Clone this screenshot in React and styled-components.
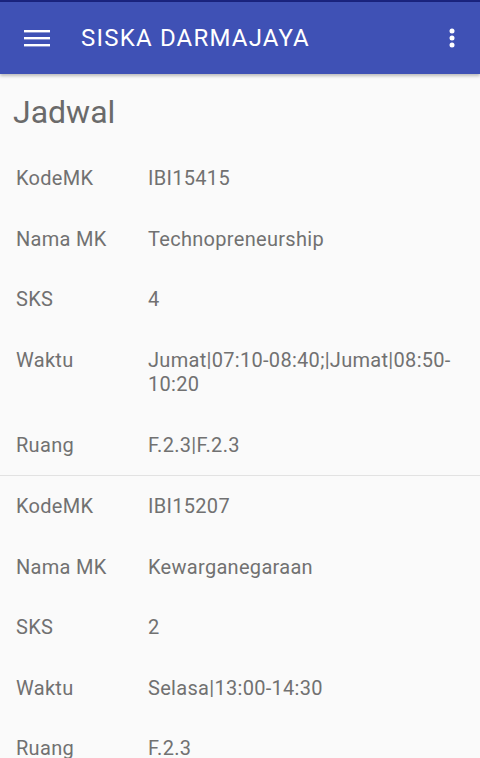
import React from "react";
import styled, { createGlobalStyle } from "styled-components";

const Global = createGlobalStyle`
  html, body { margin: 0; padding: 0; background: #fafafa; }
  body { font-family: Roboto, "Noto Sans", sans-serif; overflow: hidden; }
  * { box-sizing: border-box; }
`;

const Screen = styled.div`
  width: 480px;
  height: 758px;
  background: #fafafa;
  overflow: hidden;
  display: flex;
  flex-direction: column;
`;

const StatusEdge = styled.div`
  flex-shrink: 0;
  height: 2px;
  background: #1a237e;
`;

const Toolbar = styled.header`
  flex-shrink: 0;
  height: 72px;
  background: #3f51b5;
  display: flex;
  align-items: center;
  padding: 0 0 0 24px;
  box-shadow: 0 2px 3px rgba(0, 0, 0, 0.25);
  position: relative;
  z-index: 1;
`;

const Title = styled.h1`
  margin: 0 0 0 31px;
  font-size: 24px;
  font-weight: 400;
  color: #ffffff;
  flex: 1;
  letter-spacing: 1.2px;
`;

const IconButton = styled.button`
  border: 0;
  background: transparent;
  padding: 0;
  display: flex;
  align-items: center;
  justify-content: center;
  width: ${(p) => p.$w}px;
  height: 24px;
  margin-right: ${(p) => p.$mr || 0}px;
`;

const Content = styled.main`
  flex-shrink: 0;
  display: flex;
  flex-direction: column;
`;

const PageTitle = styled.h2`
  margin: 0;
  padding: 18px 0 0 13px;
  height: 74px;
  font-size: 32px;
  font-weight: 400;
  color: #6a6a6a;
  line-height: 40px;
`;

const Card = styled.section`
  display: flex;
  flex-direction: column;
  border-bottom: ${(p) => (p.$divider ? "1.5px solid #e2e2e2" : "none")};
`;

const Row = styled.div`
  display: grid;
  grid-template-columns: 132px 1fr;
  padding: 18px 10px 18px 16px;
  font-size: 20px;
  line-height: 24.5px;
  letter-spacing: 0.3px;
  color: #717171;
`;

const Label = styled.span``;
const Value = styled.span``;

const Hamburger = () => (
  <svg width="26" height="18" viewBox="0 0 26 18">
    <rect x="0" y="1" width="26" height="2.4" fill="#fff" />
    <rect x="0" y="8" width="26" height="2.4" fill="#fff" />
    <rect x="0" y="15" width="26" height="2.4" fill="#fff" />
  </svg>
);

const Kebab = () => (
  <svg width="6" height="20" viewBox="0 0 6 20">
    <circle cx="3" cy="3" r="2.5" fill="#fff" />
    <circle cx="3" cy="10" r="2.5" fill="#fff" />
    <circle cx="3" cy="17" r="2.5" fill="#fff" />
  </svg>
);

const data = [
  {
    KodeMK: "IBI15415",
    "Nama MK": "Technopreneurship",
    SKS: "4",
    Waktu: ["Jumat|07:10-08:40;|Jumat|08:50-", "10:20"],
    Ruang: "F.2.3|F.2.3",
  },
  {
    KodeMK: "IBI15207",
    "Nama MK": "Kewarganegaraan",
    SKS: "2",
    Waktu: "Selasa|13:00-14:30",
    Ruang: "F.2.3",
  },
];

const renderValue = (v) =>
  Array.isArray(v)
    ? v.map((part, i) => (
        <React.Fragment key={i}>
          {i > 0 && <wbr />}
          {part}
        </React.Fragment>
      ))
    : v;

export default function App() {
  return (
    <>
      <Global />
      <Screen>
        <StatusEdge />
        <Toolbar>
          <IconButton $w={26}>
            <Hamburger />
          </IconButton>
          <Title>SISKA DARMAJAYA</Title>
          <IconButton $w={6} $mr={25}>
            <Kebab />
          </IconButton>
        </Toolbar>
        <Content>
          <PageTitle>Jadwal</PageTitle>
          {data.map((item, i) => (
            <Card key={i} $divider={i < data.length - 1}>
              {Object.entries(item).map(([k, v]) => (
                <Row key={k}>
                  <Label>{k}</Label>
                  <Value>{renderValue(v)}</Value>
                </Row>
              ))}
            </Card>
          ))}
        </Content>
      </Screen>
    </>
  );
}
